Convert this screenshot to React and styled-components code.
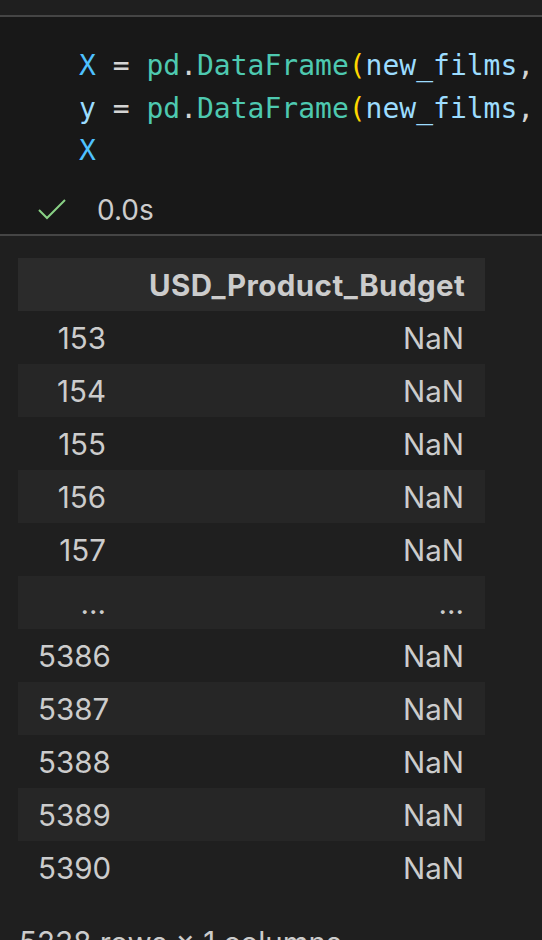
import React from 'react';
import styled, { createGlobalStyle } from 'styled-components';

const rows = [
  ['153', 'NaN'],
  ['154', 'NaN'],
  ['155', 'NaN'],
  ['156', 'NaN'],
  ['157', 'NaN'],
  ['...', '...'],
  ['5386', 'NaN'],
  ['5387', 'NaN'],
  ['5388', 'NaN'],
  ['5389', 'NaN'],
  ['5390', 'NaN'],
];

export default function App() {
  return (
    <Page>
      <GlobalStyle />
      <TopStrip />
      <CodeCell>
        <CodeLine>
          <Tok c="#4fc1ff">X</Tok> <Tok c="#d4d4d4">=</Tok> <Tok c="#4ec9b0">pd</Tok>
          <Tok c="#d4d4d4">.</Tok><Tok c="#4ec9b0">DataFrame</Tok><Tok c="#ffd700">(</Tok>
          <Tok c="#9cdcfe">new_films</Tok><Tok c="#d4d4d4">,</Tok>
        </CodeLine>
        <CodeLine>
          <Tok c="#9cdcfe">y</Tok> <Tok c="#d4d4d4">=</Tok> <Tok c="#4ec9b0">pd</Tok>
          <Tok c="#d4d4d4">.</Tok><Tok c="#4ec9b0">DataFrame</Tok><Tok c="#ffd700">(</Tok>
          <Tok c="#9cdcfe">new_films</Tok><Tok c="#d4d4d4">,</Tok>
        </CodeLine>
        <CodeLine>
          <Tok c="#4fc1ff">X</Tok>
        </CodeLine>
        <Status>
          <svg width="30" height="24" viewBox="0 0 30 24">
            <polyline points="2,12 10,20 28,2" fill="none" stroke="#89d185" strokeWidth="2" />
          </svg>
          <span>0.0s</span>
        </Status>
      </CodeCell>
      <Output>
        <Table>
          <HeadRow>
            <IndexCell />
            <Cell bold>USD_Product_Budget</Cell>
          </HeadRow>
          {rows.map((r, i) => (
            <Row key={r[0]} striped={i % 2 === 1}>
              <IndexCell>{r[0]}</IndexCell>
              <Cell>{r[1]}</Cell>
            </Row>
          ))}
        </Table>
        <Footer>5238 rows × 1 columns</Footer>
      </Output>
    </Page>
  );
}

const GlobalStyle = createGlobalStyle`
  html, body {
    margin: 0;
    padding: 0;
    background: #1f1f1f;
  }
`;

const Page = styled.div`
  width: 542px;
  height: 940px;
  overflow: hidden;
  background: #1f1f1f;
`;

const TopStrip = styled.div`
  height: 15px;
  background: #1f1f1f;
  border-bottom: 2px solid #454545;
`;

const CodeCell = styled.div`
  background: #181818;
  padding: 28px 0 0 0;
  height: 189px;
  border-bottom: 2px solid #454545;
  box-sizing: content-box;
`;

const CodeLine = styled.div`
  padding-left: 79px;
  font-family: "DejaVu Sans Mono", "Liberation Mono", monospace;
  font-size: 28px;
  line-height: 42.5px;
  white-space: pre;
  color: #d4d4d4;
`;

const Tok = styled.span.withConfig({ shouldForwardProp: (p) => p !== 'c' })`
  color: ${(p) => p.c};
`;

const Status = styled.div`
  display: flex;
  align-items: center;
  gap: 30px;
  margin-top: 20px;
  padding-left: 37px;
  font-family: Inter, "Liberation Sans", sans-serif;
  font-size: 28px;
  color: #cccccc;
  svg {
    display: block;
  }
`;

const Output = styled.div`
  padding: 22px 0 0 18px;
  font-family: Inter, "Liberation Sans", sans-serif;
  font-size: 29.5px;
  color: #cccccc;
`;

const Table = styled.div`
  width: 467px;
`;

const Row = styled.div.withConfig({ shouldForwardProp: (p) => p !== 'striped' })`
  display: grid;
  grid-template-columns: 111px 1fr;
  height: 53px;
  align-items: center;
  background: ${(p) => (p.striped ? '#262626' : 'transparent')};
`;

const HeadRow = styled(Row)`
  background: #2b2b2b;
`;

const Cell = styled.div.withConfig({ shouldForwardProp: (p) => p !== 'bold' })`
  text-align: right;
  padding: 0 21px 0 20px;
  font-weight: ${(p) => (p.bold ? 700 : 400)};
  letter-spacing: ${(p) => (p.bold ? '0.45px' : 'normal')};
  white-space: nowrap;
`;

const IndexCell = styled(Cell)`
  padding-right: 23px;
`;

const Footer = styled.div`
  margin-top: 30px;
  padding-left: 1px;
  color: #cccccc;
`;
